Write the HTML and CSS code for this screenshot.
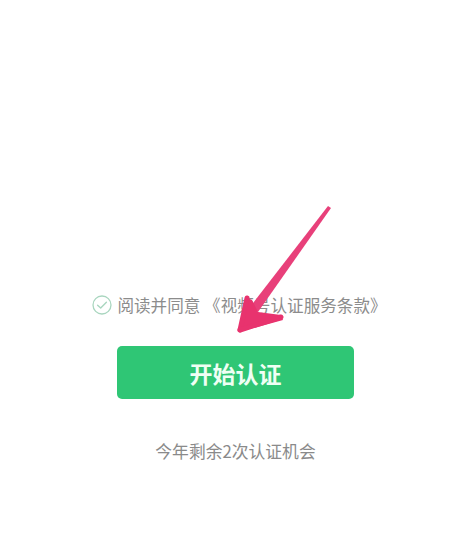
FILE: index.html
```html
<!DOCTYPE html>
<html lang="zh-CN">
<head>
<meta charset="utf-8">
<link rel="stylesheet" href="styles.css">
</head>
<body>
<main class="page">
  <div class="agree">
    <svg class="check" viewBox="0 0 20 20" width="20" height="20">
      <circle cx="10" cy="10" r="9" fill="none" stroke="#a9d6bf" stroke-width="1.3"/>
      <path d="M5.6 10.2 L8.7 13.1 L14.4 7.3" fill="none" stroke="#a9d6bf" stroke-width="1.4" stroke-linecap="round" stroke-linejoin="round"/>
    </svg>
    <span class="agree-text">阅读并同意 《视频号认证服务条款》</span>
  </div>
  <button class="start">开始认证</button>
  <p class="remain">今年剩余2次认证机会</p>
</main>
<svg class="arrow" viewBox="0 0 451 533" width="451" height="533">
  <polygon points="328,206 331,208 258,312 250,307" fill="#e8407a"/>
  <polygon points="239,332 247,298 252,300 258,312 281,315 283,320" fill="#e8336e"/>
  <line x1="240" y1="330" x2="247" y2="298" stroke="#e8336e" stroke-width="5" stroke-linecap="round"/>
  <line x1="240" y1="330" x2="281" y2="317" stroke="#e8336e" stroke-width="5" stroke-linecap="round"/>
</svg>
</body>
</html>
```
FILE: styles.css
```css
html, body {
  margin: 0;
  padding: 0;
  background: #ffffff;
}
body {
  width: 451px;
  height: 533px;
  position: relative;
  overflow: hidden;
  font-family: "Noto Sans CJK SC", "Noto Sans", sans-serif;
}
.page {
  display: flex;
  flex-direction: column;
  align-items: center;
  padding: 294px 0 0 20px;
}
.agree {
  display: flex;
  align-items: center;
  gap: 5px;
  height: 22px;
  margin-left: 8px;
}
.check {
  display: block;
}
.agree-text {
  font-size: 16.6px;
  line-height: 22px;
  color: #8c8c8c;
  letter-spacing: 0;
  white-space: pre;
}
.start {
  margin-top: 30px;
  width: 237px;
  height: 53px;
  border: none;
  border-radius: 5px;
  background: #2fc675;
  color: #effff4;
  font-family: "Noto Sans CJK SC", "Noto Sans", sans-serif;
  font-size: 23px;
  font-weight: 700;
  letter-spacing: 0;
  padding: 0;
}
.remain {
  margin: 40px 0 0;
  font-size: 16.8px;
  line-height: 24px;
  color: #8a8a8a;
}
.arrow {
  position: absolute;
  left: 0;
  top: 0;
  pointer-events: none;
}
```
